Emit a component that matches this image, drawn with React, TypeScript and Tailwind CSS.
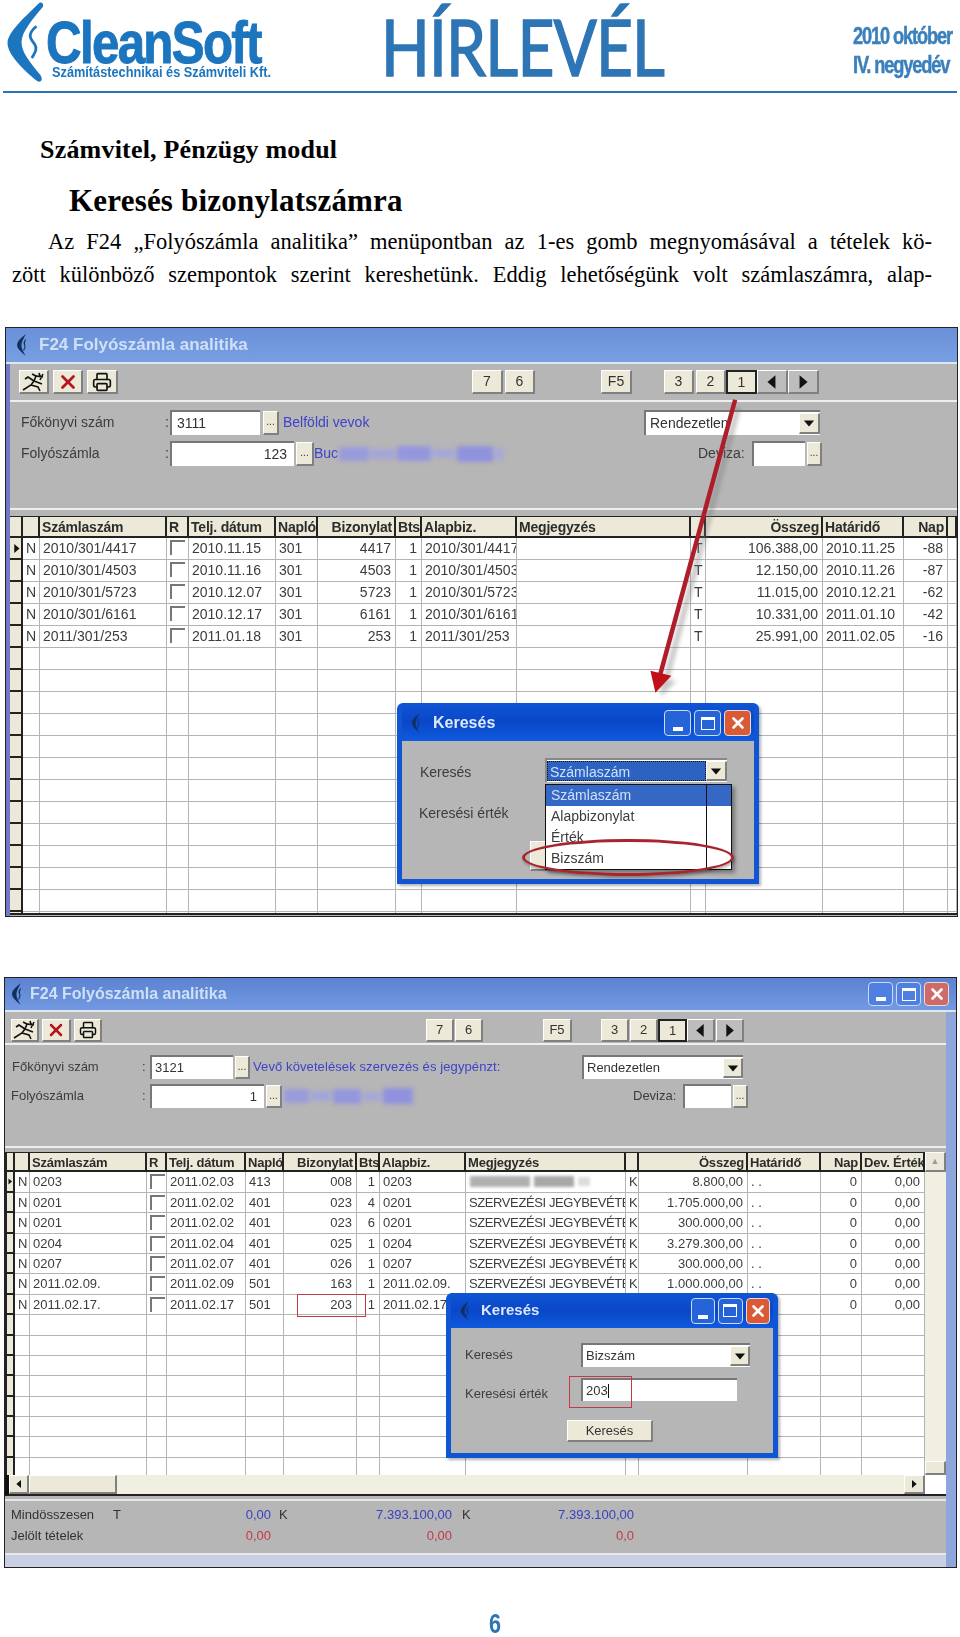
import React from "react";
import { Printer, X } from "lucide-react";

type Row = string[];

const sans = "font-['Liberation_Sans',Arial,sans-serif]";
const serif = "font-['Liberation_Serif','Times_New_Roman',serif]";

const rowsOne: Row[] = [
  ["N", "2010/301/4417", "", "2010.11.15", "301", "4417", "1", "2010/301/4417", "", "T", "106.388,00", "2010.11.25", "-88", ""],
  ["N", "2010/301/4503", "", "2010.11.16", "301", "4503", "1", "2010/301/4503", "", "T", "12.150,00", "2010.11.26", "-87", ""],
  ["N", "2010/301/5723", "", "2010.12.07", "301", "5723", "1", "2010/301/5723", "", "T", "11.015,00", "2010.12.21", "-62", ""],
  ["N", "2010/301/6161", "", "2010.12.17", "301", "6161", "1", "2010/301/6161", "", "T", "10.331,00", "2011.01.10", "-42", ""],
  ["N", "2011/301/253", "", "2011.01.18", "301", "253", "1", "2011/301/253", "", "T", "25.991,00", "2011.02.05", "-16", ""],
];

const szerv = "SZERVEZÉSI JEGYBEVÉTEL";
const rowsTwo: Row[] = [
  ["N", "0203", "", "2011.02.03", "413", "008", "1", "0203", "", "K", "8.800,00", ". .", "0", "0,00"],
  ["N", "0201", "", "2011.02.02", "401", "023", "4", "0201", szerv, "K", "1.705.000,00", ". .", "0", "0,00"],
  ["N", "0201", "", "2011.02.02", "401", "023", "6", "0201", szerv, "K", "300.000,00", ". .", "0", "0,00"],
  ["N", "0204", "", "2011.02.04", "401", "025", "1", "0204", szerv, "K", "3.279.300,00", ". .", "0", "0,00"],
  ["N", "0207", "", "2011.02.07", "401", "026", "1", "0207", szerv, "K", "300.000,00", ". .", "0", "0,00"],
  ["N", "2011.02.09.", "", "2011.02.09", "501", "163", "1", "2011.02.09.", szerv, "K", "1.000.000,00", ". .", "0", "0,00"],
  ["N", "2011.02.17.", "", "2011.02.17", "501", "203", "1", "2011.02.17.", szerv, "K", "2.000.000,00", ". .", "0", "0,00"],
];

const headersOne = ["", "Számlaszám", "R", "Telj. dátum", "Napló", "Bizonylat", "Bts", "Alapbiz.", "Megjegyzés", "", "Összeg", "Határidő", "Nap", ""];
const headersTwo = ["", "Számlaszám", "R", "Telj. dátum", "Napló", "Bizonylat", "Bts", "Alapbiz.", "Megjegyzés", "", "Összeg", "Határidő", "Nap", "Dev. Érték"];

const RIGHT = [5, 6, 10, 12, 13];

const Crest = ({ className }: { className: string }) => (
  <svg viewBox="0 0 12 20" className={className}>
    <path d="M9 0 C2 5 1 8 1 10 C1 13 4 16 9 20 C6 15 5 13 5 10 C5 7 7 4 9 0 Z" fill="#12305f" />
    <path d="M9 5 C7 7 7 8 8 10 C9 12 8 13 7 15" stroke="#12305f" strokeWidth="1" fill="none" />
  </svg>
);

const Runner = () => (
  <svg viewBox="0 0 24 20" className="w-[24px] h-[20px]">
    <path d="M1 18 L9 13 L12 9 L20 12 M12 9 L6 5 L3 7 M12 9 L14 4 L21 5 M9 13 L16 15 L18 19 M14 4 L10 2 M17 1 L19 7 M21 2 L18 8" stroke="#111" strokeWidth="1.6" fill="none" />
  </svg>
);

const Raised = ({ className = "", children }: { className?: string; children?: React.ReactNode }) => (
  <div className={`flex items-center justify-center bg-[#ece9d8] border-t border-l border-white border-r-2 border-b-2 border-r-[#808080] border-b-[#808080] text-[#333] ${className}`}>
    {children}
  </div>
);

const Dots = ({ className }: { className: string }) => (
  <Raised className={`text-[10px] leading-none ${className}`}>...</Raised>
);

const Sunken = ({ className = "", children }: { className?: string; children?: React.ReactNode }) => (
  <div className={`flex items-center bg-white border-t-2 border-l-2 border-[#777] text-[#333] overflow-hidden whitespace-nowrap ${className}`}>
    {children}
  </div>
);

const Arrow = ({ dir, size }: { dir: "l" | "r" | "d"; size: string }) => {
  const pts = dir === "l" ? "9,1 9,13 2,7" : dir === "r" ? "3,1 3,13 10,7" : "1,4 13,4 7,11";
  return (
    <svg viewBox={dir === "d" ? "0 0 14 14" : "0 0 12 14"} className={size}>
      <polygon points={pts} fill="#111" />
    </svg>
  );
};

const Controls = ({ className, washed }: { className: string; washed?: boolean }) => {
  const box = `flex-1 rounded-[4px] border border-[#c9dcf8] flex items-center justify-center ${washed ? "bg-[#4f7fe0]" : "bg-[#2563d8]"}`;
  return (
    <div className={`flex gap-[3px] ${className}`}>
      <div className={`${box} items-end pb-[4px]`}><div className="w-[10px] h-[4px] bg-white" /></div>
      <div className={box}><div className="w-[14px] h-[13px] border border-white border-t-[3px]" /></div>
      <div className={`flex-1 rounded-[4px] border border-[#e8dcd8] flex items-center justify-center ${washed ? "bg-[#d06a68]" : "bg-[#da5a36]"}`}>
        <X className="w-[18px] h-[18px] text-white" strokeWidth={3.5} />
      </div>
    </div>
  );
};

const DataGrid = ({
  cols,
  rowClass,
  textClass,
  headers,
  rows,
  count,
}: {
  cols: string;
  rowClass: string;
  textClass: string;
  headers: string[];
  rows: Row[];
  count: number;
}) => {
  const blank: Row = Array(14).fill("");
  const all = Array.from({ length: count }, (_, i) => rows[i] ?? blank);
  return (
    <div className={`${textClass} ${sans} flex-1 min-w-0 overflow-hidden`}>
      <div className={`grid ${cols} ${rowClass} bg-[#ece9d8] border-t border-b-2 border-[#222] font-bold tracking-[-0.2px] text-[#2c2c2c]`}>
        <div className="border-r-2 border-[#222]" />
        {headers.map((h, i) => (
          <div key={i} className={`px-[2px] overflow-hidden whitespace-nowrap border-r-2 border-[#222] ${RIGHT.includes(i) ? "text-right" : ""}`}>
            {h}
          </div>
        ))}
      </div>
      {all.map((row, r) => (
        <div key={r} className={`grid ${cols} ${rowClass} bg-white text-[#3c3c3c]`}>
          <div className="bg-[#ece9d8] border-r-2 border-b-2 border-[#222] flex items-center justify-end">
            {r === 0 && <Arrow dir="r" size="w-[9px] h-[11px]" />}
          </div>
          {row.map((cell, i) => (
            <div key={i} className={`relative overflow-hidden whitespace-nowrap border-r border-b border-[#b4b4b4] px-[3px] ${RIGHT.includes(i) ? "text-right pr-[4px]" : ""} ${i === 8 ? "tracking-[-0.4px]" : ""}`}>
              {i === 2 && rows[r] ? (
                <div className="w-[15px] h-[15px] mt-[2px] border-t-2 border-l-2 border-[#777]" />
              ) : (
                cell
              )}
            </div>
          ))}
        </div>
      ))}
    </div>
  );
};

const BlurBlock = ({ className }: { className: string }) => (
  <div className={`flex items-center gap-[2px] h-[18px] blur-[2px] ${className}`}>
    <div className="w-[30px] h-[14px] bg-[#9a9bdc]" />
    <div className="w-[24px] h-[10px] bg-[#a4a5d8]" />
    <div className="w-[34px] h-[15px] bg-[#9597de]" />
    <div className="w-[22px] h-[9px] bg-[#a6a7d8]" />
    <div className="w-[36px] h-[16px] bg-[#9092de]" />
    <div className="flex-1 h-[12px] bg-[#a6a8d6]" />
  </div>
);

export default function App() {
  return (
    <div className={`relative w-[960px] h-[1637px] overflow-hidden bg-white ${serif}`}>
      {/* page header */}
      <header className="relative h-[93px] mx-[3px] border-b-2 border-[#2e75b5] text-[#2e75b5] flex">
        <div className="relative w-[378px] shrink-0 h-full">
          <svg viewBox="0 0 50 90" className="absolute left-[1px] top-[2px] w-[50px] h-[84px]">
            <path d="M36 1 C14 22 2 34 2 44 C2 56 18 72 34 85 C39 87 40 82 37 78 C26 64 17 54 17 43 C17 32 29 18 40 5 C41 1 38 0 36 1 Z" fill="#1b75bf" />
            <path d="M33 26 C22 35 27 40 31 45 C35 51 30 56 28 60" stroke="#1b75bf" strokeWidth="3" fill="none" />
          </svg>
          <div className={`absolute left-[43px] top-[11px] origin-left scale-x-[0.82] whitespace-nowrap text-[60px] leading-[64px] font-bold tracking-[-2px] text-[#1b75bf] [-webkit-text-stroke:1px_#1b75bf] ${sans}`}>
            CleanSoft
          </div>
          <div className={`absolute left-[49px] top-[63px] origin-left scale-x-[0.85] whitespace-nowrap text-[15px] leading-[18px] font-bold text-[#1b75bf] ${sans}`}>
            Számítástechnikai és Számviteli Kft.
          </div>
        </div>
        <div className="w-[472px] shrink-0">
          <div className="mt-[5px] font-['Lato',sans-serif] text-[78px] leading-[82px] origin-left scale-x-[0.82] whitespace-nowrap tracking-[-1px] [-webkit-text-stroke:1.5px_#2e75b5]">HÍRLEVÉL</div>
        </div>
        <div className={`${sans} w-[104px] shrink-0 pt-[21px] font-bold text-[24px] leading-[29px] tracking-[-1.5px] text-[#3a80bc] whitespace-nowrap [-webkit-text-stroke:0.5px_#3a80bc]`}>
          <div className="origin-left scale-x-[0.76]">2010 október</div>
          <div className="origin-left scale-x-[0.76]">IV. negyedév</div>
        </div>
      </header>

      {/* article text */}
      <section className="text-black">
        <h2 className="mt-[41px] ml-[40px] text-[26px] leading-[32px] font-bold tracking-[0.2px]">Számvitel, Pénzügy modul</h2>
        <h1 className="mt-[19px] ml-[69px] text-[31px] leading-[32px] font-bold tracking-[0.2px]">Keresés bizonylatszámra</h1>
        <p className="mt-[8px] ml-[48px] w-[884px] text-[22.5px] leading-[33px] text-justify [text-align-last:justify]">
          Az F24 „Folyószámla analitika” menüpontban az 1-es gomb megnyomásával a tételek kö-
        </p>
        <p className="ml-[12px] w-[920px] text-[22.5px] leading-[33px] text-justify [text-align-last:justify]">
          zött különböző szempontok szerint kereshetünk. Eddig lehetőségünk volt számlaszámra, alap-
        </p>
      </section>

      {/* first window */}
      <div className={`relative mt-[36px] ml-[5px] w-[953px] h-[590px] border border-[#222] bg-[#b6b6b6] flex flex-col overflow-hidden blur-[0.35px] ${sans}`}>
        <div className="h-[36px] shrink-0 bg-linear-to-b from-[#6a90d8] to-[#789fe2] flex items-center pl-[10px] border-b-2 border-[#dfe6f2]">
          <Crest className="w-[13px] h-[24px]" />
          <span className="ml-[10px] text-[17px] font-bold text-[#cfe0f6]">F24 Folyószámla analitika</span>
        </div>
        <div className="flex-1 min-h-0 flex flex-col border-l-[4px] border-[#6f79c8]">
          <div className="h-[38px] shrink-0 flex items-center pl-[9px] border-b-2 border-[#eeeeee]">
            <Raised className="w-[30px] h-[24px]"><Runner /></Raised>
            <Raised className="ml-[4px] w-[30px] h-[24px]"><X className="w-[22px] h-[22px] text-[#b3161c]" strokeWidth={3} /></Raised>
            <Raised className="ml-[4px] w-[31px] h-[24px]"><Printer className="w-[20px] h-[20px] text-[#111]" strokeWidth={2} /></Raised>
            <Raised className="ml-[354px] w-[31px] h-[24px] text-[14px]">7</Raised>
            <Raised className="ml-[2px] w-[30px] h-[24px] text-[14px]">6</Raised>
            <Raised className="ml-[66px] w-[31px] h-[24px] text-[14px]">F5</Raised>
            <Raised className="ml-[32px] w-[30px] h-[24px] text-[14px]">3</Raised>
            <Raised className="ml-[2px] w-[30px] h-[24px] text-[14px]">2</Raised>
            <Raised className="w-[31px] h-[24px] text-[14px] !border-2 !border-[#222]">1</Raised>
            <Raised className="w-[31px] h-[24px] !bg-[#bdbdbd]"><Arrow dir="l" size="w-[14px] h-[16px]" /></Raised>
            <Raised className="w-[31px] h-[24px] !bg-[#bdbdbd]"><Arrow dir="r" size="w-[14px] h-[16px]" /></Raised>
          </div>
          <div className="h-[108px] shrink-0 pt-[8px] border-b-2 border-[#eeeeee] text-[14px] text-[#3c3c3c]">
            <div className="flex items-center h-[25px]">
              <span className="w-[148px] pl-[11px]">Főkönyvi szám</span>
              <span className="w-[12px] pl-[7px]">:</span>
              <Sunken className="w-[90px] h-[25px] pl-[5px]">3111</Sunken>
              <Dots className="ml-[3px] w-[16px] h-[24px]" />
              <span className="ml-[4px] w-[361px] text-[#3d44c8]">Belföldi vevok</span>
              <Sunken className="w-[176px] h-[25px] pl-[4px] justify-between">
                Rendezetlen
                <Raised className="w-[21px] h-[21px]"><Arrow dir="d" size="w-[12px] h-[12px]" /></Raised>
              </Sunken>
            </div>
            <div className="flex items-center h-[25px] mt-[6px]">
              <span className="w-[148px] pl-[11px]">Folyószámla</span>
              <span className="w-[12px] pl-[7px]">:</span>
              <Sunken className="w-[124px] h-[25px] justify-end pr-[7px]">123</Sunken>
              <Dots className="ml-[2px] w-[18px] h-[24px]" />
              <span className="text-[#3d44c8] w-[25px] whitespace-nowrap">Buc</span>
              <BlurBlock className="w-[165px]" />
              <span className="ml-[194px] w-[54px]">Deviza:</span>
              <Sunken className="w-[53px] h-[25px]" />
              <Dots className="ml-[2px] w-[15px] h-[24px]" />
            </div>
          </div>
          <div className="h-[6px] shrink-0" />
          <div className="flex-1 min-h-0 flex border-b-2 border-[#222] mb-[1px]">
            <DataGrid
              cols="grid-cols-[13px_17px_127px_22px_87px_42px_78px_26px_95px_174px_15px_117px_81px_44px_9px]"
              rowClass="h-[22px] leading-[21px]"
              textClass="text-[14px]"
              headers={headersOne}
              rows={rowsOne}
              count={18}
            />
          </div>
        </div>

        {/* red arrow */}
        <svg className="absolute left-0 top-0 w-full h-full pointer-events-none" viewBox="0 0 953 590">
          <line x1="734" y1="80" x2="662" y2="352" stroke="#777" strokeWidth="5" opacity="0.45" className="blur-[2px]" />
          <polygon points="655,352 672,354 657,370" fill="#777" opacity="0.4" className="blur-[2px]" />
          <line x1="731" y1="72" x2="656" y2="347" stroke="#ae1e2a" strokeWidth="4.5" />
          <polygon points="646,344 667,349 651,366" fill="#c01018" />
        </svg>

        {/* search dialog with open list */}
        <div className="absolute left-[391px] top-[375px] w-[362px] h-[181px] rounded-t-[6px] bg-[#0f55d4] p-[5px] pt-0 flex flex-col shadow-[2px_2px_3px_rgba(0,0,0,0.3)]">
          <div className="h-[38px] shrink-0 flex items-center pl-[9px] pt-[2px] bg-linear-to-b from-[#0f55d4] via-[#0a47c8] to-[#0f5ade]">
            <Crest className="w-[11px] h-[20px]" />
            <span className="ml-[11px] text-[16px] font-bold text-[#dbe9fb]">Keresés</span>
            <Controls className="ml-auto mr-[3px] w-[87px] h-[26px]" />
          </div>
          <div className="relative flex-1 bg-[#b6b6b6] text-[14px] text-[#3c3c3c]">
            <div className="pl-[18px] pt-[21px]">Keresés</div>
            <div className="pl-[17px] pt-[20px]">Keresési érték</div>
            <Raised className="absolute left-[128px] top-[100px] w-[30px] h-[30px]" />
            <Sunken className="absolute left-[143px] top-[17px] w-[182px] h-[24px] !text-[#cfe0f8] !border-[#888]">
              <span className="flex-1 h-[20px] leading-[20px] pl-[2px] bg-[#2c63c0] border border-dotted border-[#111]">Számlaszám</span>
              <Raised className="w-[21px] h-[20px]"><Arrow dir="d" size="w-[12px] h-[12px]" /></Raised>
            </Sunken>
            <div className="absolute left-[143px] top-[43px] w-[187px] h-[86px] bg-white border border-[#111] shadow-[3px_3px_4px_rgba(0,0,0,0.35)] flex flex-col">
              {["Számlaszám", "Alapbizonylat", "Érték", "Bizszám"].map((t, i) => (
                <div key={t} className={`h-[21px] leading-[20px] pl-[5px] ${i === 0 ? "bg-[#3468c4] text-[#cfe0f8]" : ""}`}>{t}</div>
              ))}
              <div className="absolute left-[160px] top-0 bottom-0 w-[1px] bg-[#111]" />
            </div>
            <div className="absolute left-[120px] top-[98px] w-[212px] h-[37px] rounded-[50%] border-[3px] border-[#a8242e] shadow-[1px_2px_3px_rgba(0,0,0,0.3)]" />
          </div>
        </div>
      </div>

      {/* second window */}
      <div className={`relative mt-[60px] ml-[4px] w-[953px] h-[591px] border border-[#222] bg-[#8fa6dc] flex flex-col overflow-hidden blur-[0.35px] ${sans}`}>
        <div className="h-[34px] shrink-0 bg-linear-to-b from-[#5c82d2] to-[#7299e0] flex items-center pl-[6px] border-b-2 border-[#dfe6f2]">
          <Crest className="w-[13px] h-[24px]" />
          <span className="ml-[6px] text-[16px] font-bold text-[#cfe0f6]">F24 Folyószámla analitika</span>
          <Controls washed className="ml-auto mr-[7px] w-[81px] h-[24px]" />
        </div>
        <div className="mr-[10px] flex-1 min-h-0 bg-[#b6b6b6] flex flex-col">
          <div className="h-[33px] shrink-0 flex items-center pl-[6px] pt-[6px] border-b-2 border-[#eeeeee]">
            <Raised className="w-[28px] h-[23px]"><Runner /></Raised>
            <Raised className="ml-[3px] w-[29px] h-[23px]"><X className="w-[20px] h-[20px] text-[#b3161c]" strokeWidth={3} /></Raised>
            <Raised className="ml-[3px] w-[28px] h-[23px]"><Printer className="w-[18px] h-[18px] text-[#111]" strokeWidth={2} /></Raised>
            <Raised className="ml-[324px] w-[28px] h-[23px] text-[13px]">7</Raised>
            <Raised className="ml-[1px] w-[28px] h-[23px] text-[13px]">6</Raised>
            <Raised className="ml-[60px] w-[29px] h-[23px] text-[13px]">F5</Raised>
            <Raised className="ml-[29px] w-[28px] h-[23px] text-[13px]">3</Raised>
            <Raised className="ml-[1px] w-[28px] h-[23px] text-[13px]">2</Raised>
            <Raised className="w-[29px] h-[23px] text-[13px] !border-2 !border-[#222]">1</Raised>
            <Raised className="w-[28px] h-[23px] !bg-[#bdbdbd]"><Arrow dir="l" size="w-[13px] h-[15px]" /></Raised>
            <Raised className="ml-[1px] w-[28px] h-[23px] !bg-[#bdbdbd]"><Arrow dir="r" size="w-[13px] h-[15px]" /></Raised>
          </div>
          <div className="h-[103px] shrink-0 pt-[10px] border-b-2 border-[#eeeeee] text-[13px] text-[#3c3c3c]">
            <div className="flex items-center h-[24px]">
              <span className="w-[137px] pl-[7px]">Főkönyvi szám</span>
              <span className="w-[8px]">:</span>
              <Sunken className="w-[83px] h-[24px] pl-[3px]">3121</Sunken>
              <Dots className="ml-[2px] w-[15px] h-[23px]" />
              <span className="ml-[3px] w-[329px] overflow-hidden whitespace-nowrap tracking-[0.1px] text-[#3d44c8]">Vevő követelések szervezés és jegypénzt:</span>
              <Sunken className="w-[161px] h-[24px] pl-[3px] justify-between">
                Rendezetlen
                <Raised className="w-[20px] h-[20px]"><Arrow dir="d" size="w-[12px] h-[12px]" /></Raised>
              </Sunken>
            </div>
            <div className="flex items-center h-[24px] mt-[5px]">
              <span className="w-[137px] pl-[6px]">Folyószámla</span>
              <span className="w-[8px]">:</span>
              <Sunken className="w-[114px] h-[24px] justify-end pr-[7px]">1</Sunken>
              <Dots className="ml-[2px] w-[16px] h-[23px]" />
              <BlurBlock className="ml-[2px] w-[131px]" />
              <span className="ml-[218px] w-[50px]">Deviza:</span>
              <Sunken className="w-[48px] h-[24px]" />
              <Dots className="ml-[2px] w-[15px] h-[23px]" />
            </div>
          </div>
          <div className="h-[4px] shrink-0" />
          <div className="h-[323px] shrink-0 flex border-l-[2px] border-[#222] overflow-hidden">
            <DataGrid
              cols="grid-cols-[8px_15px_117px_20px_79px_38px_73px_23px_86px_160px_13px_109px_73px_41px_63px]"
              rowClass="h-[20.4px] leading-[19px]"
              textClass="text-[13px]"
              headers={headersTwo}
              rows={rowsTwo}
              count={15}
            />
            <div className="w-[21px] shrink-0 flex flex-col bg-[#f1eee2]">
              <Raised className="h-[20px] text-[#999] text-[9px]">▲</Raised>
              <div className="flex-1" />
              <Raised className="h-[14px]" />
            </div>
          </div>
          <div className="h-[21px] shrink-0 flex items-center bg-[#f1eee2] border-l-[4px] border-b-2 border-b-[#222] border-l-[#111]">
            <Raised className="w-[20px] h-full"><Arrow dir="l" size="w-[8px] h-[10px]" /></Raised>
            <Raised className="w-[88px] h-full" />
            <div className="flex-1" />
            <Raised className="w-[21px] h-full"><Arrow dir="r" size="w-[8px] h-[10px]" /></Raised>
            <div className="w-[21px] h-full bg-white" />
          </div>
          <div className="h-[3px] shrink-0" />
          <div className="h-[56px] shrink-0 border-t-2 border-b-2 border-[#e8e8e8] text-[13px] leading-[21px] text-[#333] pt-[3px]">
            <div className="flex h-[21px]">
              <span className="w-[108px] pl-[6px] whitespace-nowrap">Mindösszesen</span>
              <span className="w-[10px]">T</span>
              <span className="w-[148px] text-right text-[#3a3fc0]">0,00</span>
              <span className="ml-[8px] w-[10px]">K</span>
              <span className="w-[163px] text-right text-[#3a3fc0]">7.393.100,00</span>
              <span className="ml-[10px] w-[10px]">K</span>
              <span className="w-[162px] text-right text-[#3a3fc0]">7.393.100,00</span>
            </div>
            <div className="flex h-[21px] text-[#c23a44]">
              <span className="w-[118px] pl-[6px] text-[#333]">Jelölt tételek</span>
              <span className="w-[148px] text-right">0,00</span>
              <span className="w-[181px] text-right">0,00</span>
              <span className="w-[182px] text-right">0,0</span>
            </div>
          </div>
          <div className="flex-1 bg-[#c9d0e4]" />
        </div>

        {/* blurred note in the first row */}
        <div className="absolute left-[465px] top-[198px] flex items-center gap-[4px] blur-[1.5px]">
          <div className="w-[60px] h-[11px] bg-[#b0b0b0]" />
          <div className="w-[40px] h-[11px] bg-[#a8a8a8]" />
          <div className="w-[12px] h-[9px] bg-[#dcdcdc]" />
        </div>

        {/* highlight on the found row */}
        <div className="absolute left-[292px] top-[316px] w-[69px] h-[23px] border border-[#c23a44]" />

        {/* search dialog */}
        <div className="absolute left-[441px] top-[315px] w-[332px] h-[165px] rounded-t-[6px] bg-[#0f55d4] p-[5px] pt-0 flex flex-col shadow-[2px_2px_3px_rgba(0,0,0,0.3)]">
          <div className="h-[35px] shrink-0 flex items-center pl-[9px] bg-linear-to-b from-[#0f55d4] via-[#0a47c8] to-[#0f5ade]">
            <Crest className="w-[11px] h-[20px]" />
            <span className="ml-[10px] text-[15px] font-bold text-[#dbe9fb]">Keresés</span>
            <Controls className="ml-auto mr-[3px] w-[79px] h-[26px]" />
          </div>
          <div className="relative flex-1 bg-[#b6b6b6] text-[13px] text-[#3c3c3c]">
            <div className="pl-[14px] pt-[17px]">Keresés</div>
            <div className="pl-[14px] pt-[19px]">Keresési érték</div>
            <Sunken className="absolute left-[130px] top-[15px] w-[169px] h-[24px] pl-[3px] justify-between">
              Bizszám
              <Raised className="w-[20px] h-[20px]"><Arrow dir="d" size="w-[12px] h-[12px]" /></Raised>
            </Sunken>
            <Sunken className="absolute left-[130px] top-[50px] w-[156px] h-[23px] pl-[3px]">
              203<span className="w-[1px] h-[14px] bg-[#111]" />
            </Sunken>
            <div className="absolute left-[118px] top-[48px] w-[63px] h-[32px] border border-[#c23a44]" />
            <Raised className="absolute left-[116px] top-[92px] w-[86px] h-[22px]">Keresés</Raised>
          </div>
        </div>
      </div>

      {/* page number */}
      <div className={`absolute left-[489px] top-[1609px] origin-left scale-x-[0.8] text-[27px] leading-[30px] font-bold text-[#2e75b5] ${sans}`}>6</div>
    </div>
  );
}
